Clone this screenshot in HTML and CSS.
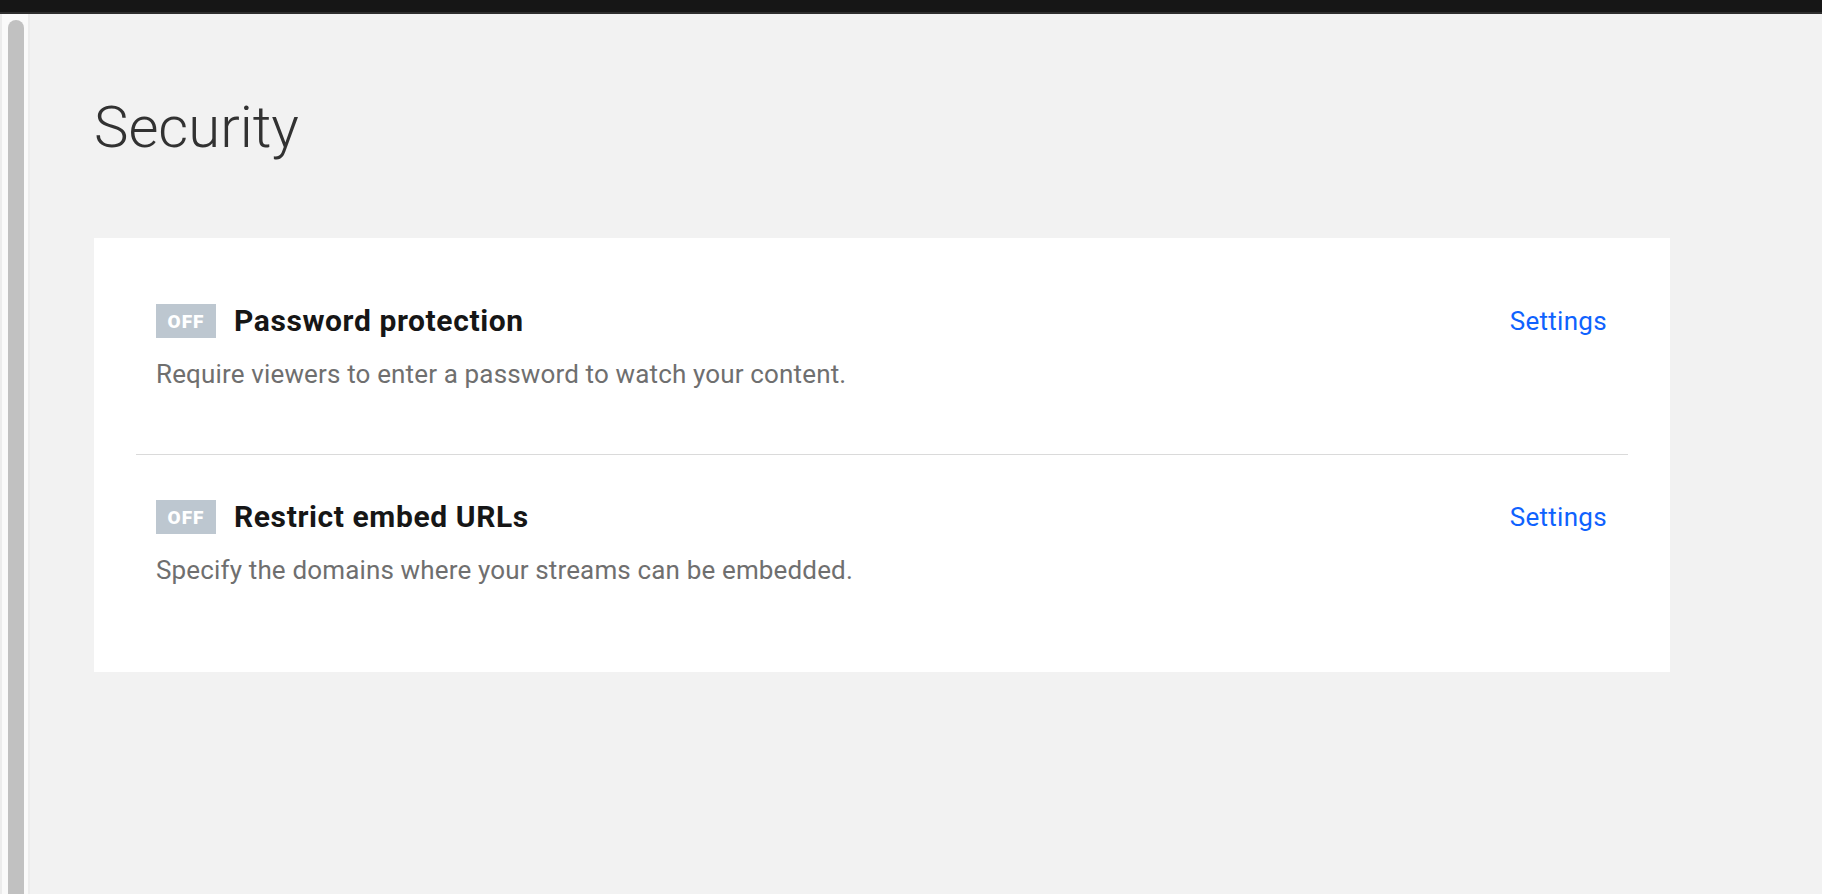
FILE: index.html
```html
<!DOCTYPE html>
<html lang="en">
<head>
<meta charset="utf-8">
<title>Security</title>
<link rel="stylesheet" href="styles.css">
</head>
<body>
<div class="topbar"></div>
<div class="layout">
  <div class="rail"><div class="rail-thumb"></div></div>
  <main class="main">
    <h1 class="page-title">Security</h1>
    <section class="card">
      <div class="row">
        <div class="row-head">
          <span class="badge">OFF</span>
          <h2 class="row-title">Password protection</h2>
          <a class="row-link" href="#">Settings</a>
        </div>
        <p class="row-desc">Require viewers to enter a password to watch your content.</p>
      </div>
      <div class="row row-divided">
        <div class="row-head">
          <span class="badge">OFF</span>
          <h2 class="row-title">Restrict embed URLs</h2>
          <a class="row-link" href="#">Settings</a>
        </div>
        <p class="row-desc">Specify the domains where your streams can be embedded.</p>
      </div>
    </section>
  </main>
</div>
</body>
</html>
```
FILE: styles.css
```css
* { box-sizing: border-box; }
html, body { margin: 0; padding: 0; height: 100%; }
body {
  background: #f2f2f2;
  font-family: Roboto, "Noto Sans", sans-serif;
  overflow: hidden;
}
.topbar {
  height: 14px;
  background: #161616;
  border-bottom: 2px solid #2e2e2e;
}
.layout {
  display: flex;
  height: calc(100% - 14px);
}
.rail {
  width: 30px;
  flex: none;
  background: #fafafa;
  border-left: 2px solid #ececec;
  border-right: 2px solid #ececec;
  padding: 6px 4px 0 6px;
  overflow: hidden;
}
.rail-thumb {
  width: 16px;
  height: 100%;
  background: #c1c1c1;
  border-radius: 8px 8px 0 0;
}
.main {
  flex: 1;
  padding: 79px 0 0 64px;
}
.page-title {
  margin: 0 0 77px;
  font-size: 58px;
  line-height: 68px;
  font-weight: 300;
  color: #323232;
}
.card {
  width: 1576px;
  background: #ffffff;
  padding: 21px 42px 22px;
}
.row {
  padding: 45px 21px 62px 20px;
}
.row-divided {
  border-top: 1px solid #dadada;
}
.row-head {
  display: flex;
  align-items: center;
  height: 34px;
}
.badge {
  display: inline-flex;
  align-items: center;
  justify-content: center;
  width: 60px;
  height: 34px;
  background: #bdc7d0;
  color: #ffffff;
  font-size: 19px;
  font-weight: 900;
  letter-spacing: 1px;
}
.row-title {
  margin: 0 0 0 18px;
  font-size: 30px;
  font-weight: 700;
  letter-spacing: 0.6px;
  color: #161616;
  line-height: 34px;
}
.row-link {
  margin-left: auto;
  font-size: 26px;
  letter-spacing: 0.3px;
  color: #0f62fe;
  text-decoration: none;
  line-height: 34px;
}
.row-desc {
  margin: 18px 0 0;
  font-size: 26px;
  line-height: 36px;
  letter-spacing: 0.15px;
  color: #6f6f6f;
}
```
